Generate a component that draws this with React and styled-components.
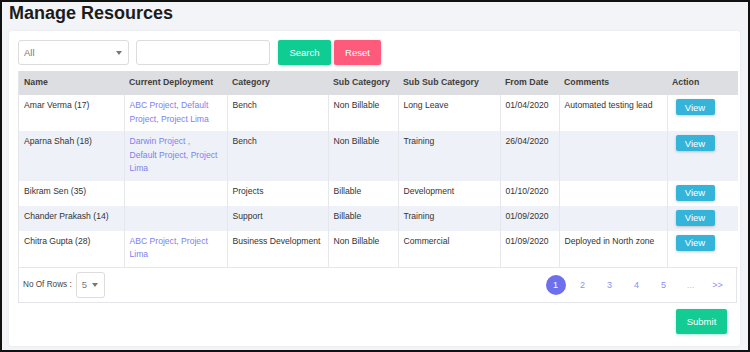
import styled, { createGlobalStyle } from "styled-components";

const GlobalStyle = createGlobalStyle`
  * { box-sizing: border-box; }
  body {
    margin: 0;
    font-family: "Liberation Sans", Arial, sans-serif;
  }
`;

const Page = styled.div`
  width: 750px;
  height: 352px;
  border: 2px solid #111;
  background: #f3f4f8;
  padding: 0 0 0 7px;
  overflow: hidden;
`;

const Title = styled.h1`
  margin: 0;
  font-size: 18px;
  line-height: 22px;
  font-weight: 700;
  color: #1c1c1c;
`;

const Card = styled.div`
  margin-top: 7px;
  width: 731px;
  height: 315px;
  background: #fff;
  border-radius: 3px;
  box-shadow: 0 0 3px rgba(0, 0, 0, 0.06);
  padding: 9px 3px 0 9px;
`;

const Toolbar = styled.div`
  display: flex;
  align-items: center;
  height: 25px;
`;

const SelectBox = styled.div`
  display: flex;
  align-items: center;
  justify-content: space-between;
  width: ${(p) => p.$w}px;
  height: ${(p) => p.$h}px;
  border: 1px solid #dcdcdc;
  border-radius: 3px;
  padding: 0 6px 0 5px;
  color: #7a7a7a;
  font-size: ${(p) => p.$fs}px;
  background: #fff;
`;

const Caret = styled.span`
  width: 0;
  height: 0;
  border-left: 3.5px solid transparent;
  border-right: 3.5px solid transparent;
  border-top: 4px solid #777;
`;

const TextInput = styled.div`
  width: 134px;
  height: 25px;
  margin-left: 7px;
  border: 1px solid #dcdcdc;
  border-radius: 3px;
`;

const Button = styled.button`
  border: none;
  border-radius: 2px;
  color: #fff;
  font-family: inherit;
  font-size: 9.5px;
  padding: 0;
  width: ${(p) => p.$w}px;
  height: ${(p) => p.$h}px;
  margin-left: ${(p) => p.$ml || 0}px;
  background: ${(p) => p.$bg};
  box-shadow: 0 1px 3px ${(p) => p.$shadow || "rgba(0,0,0,0.15)"};
`;

const TableWrap = styled.div`
  margin-top: 6px;
  width: 719px;
  border: 1px solid #e4e5e9;
  border-top: none;
`;

const Table = styled.table`
  width: 100%;
  border-collapse: collapse;
  table-layout: fixed;
  font-size: 8.6px;
  line-height: 13.5px;
  color: #333;
`;

const HeadCell = styled.th`
  background: #dddee2;
  height: 24px;
  padding: 0 2px 0 5px;
  text-align: left;
  font-weight: 700;
  font-size: 8.75px;
  color: #3e3e3e;
`;

const Row = styled.tr`
  background: ${(p) => (p.$striped ? "#eef1f8" : "#fff")};
`;

const Cell = styled.td`
  vertical-align: top;
  padding: 4px ${(p) => p.$pr}px 5px 5px;
  border-left: 1px solid #e6e7eb;
  color: ${(p) => (p.$link ? "#7d82ee" : "#333")};
  &:first-child { border-left: none; }
  tbody tr:last-child & { border-bottom: 1px solid #e6e7eb; }
`;

const ActionCell = styled(Cell)`
  padding: 4px 0 5px 8px;
`;

const ViewButton = styled(Button)`
  display: block;
  background: #35b4da;
`;

const Footer = styled.div`
  display: flex;
  align-items: center;
  justify-content: space-between;
  height: 34px;
  padding: 0 5px 0 4px;
`;

const RowsLabel = styled.div`
  display: flex;
  align-items: center;
  gap: 4px;
  font-size: 8.2px;
  color: #444;
`;

const Pager = styled.div`
  display: flex;
  align-items: center;
`;

const PageItem = styled.span`
  width: 27px;
  display: flex;
  justify-content: center;
  font-size: 9px;
  color: ${(p) => (p.$faint ? "#b9bbf4" : "#8d90ef")};
`;

const ActiveDot = styled.span`
  width: 20px;
  height: 20px;
  border-radius: 50%;
  background: #6c70ec;
  color: #fff;
  display: flex;
  align-items: center;
  justify-content: center;
`;

const FormActions = styled.div`
  display: flex;
  justify-content: flex-end;
  width: 719px;
  padding-right: 10px;
  margin-top: 6px;
`;

const cols = [
  { w: 105, pr: 4 },
  { w: 103, pr: 8 },
  { w: 101, pr: 2 },
  { w: 70, pr: 2 },
  { w: 102, pr: 4 },
  { w: 59, pr: 2 },
  { w: 108, pr: 2 },
  { w: 71, pr: 0 },
];
const heads = ["Name", "Current Deployment", "Category", "Sub Category", "Sub Sub Category", "From Date", "Comments", "Action"];

const rows = [
  ["Amar Verma (17)", "ABC Project, Default Project, Project Lima", "Bench", "Non Billable", "Long Leave", "01/04/2020", "Automated testing lead"],
  ["Aparna Shah (18)", "Darwin Project , Default Project, Project Lima", "Bench", "Non Billable", "Training", "26/04/2020", ""],
  ["Bikram Sen (35)", "", "Projects", "Billable", "Development", "01/10/2020", ""],
  ["Chander Prakash (14)", "", "Support", "Billable", "Training", "01/09/2020", ""],
  ["Chitra Gupta (28)", "ABC Project, Project Lima", "Business Development", "Non Billable", "Commercial", "01/09/2020", "Deployed in North zone"],
];

const App = () => {
  return (
    <Page>
      <GlobalStyle />
      <Title>Manage Resources</Title>
      <Card>
        <Toolbar>
          <SelectBox $w={111} $h={25} $fs={9.5}>
            All
            <Caret />
          </SelectBox>
          <TextInput />
          <Button $w={53} $h={25} $ml={8} $bg="#0fcc93">Search</Button>
          <Button $w={47} $h={25} $ml={3} $bg="#fe5a7c">Reset</Button>
        </Toolbar>
        <TableWrap>
          <Table>
            <colgroup>
              {cols.map((c, i) => (
                <col key={i} style={{ width: c.w }} />
              ))}
            </colgroup>
            <thead>
              <tr>
                {heads.map((h) => (
                  <HeadCell key={h}>{h}</HeadCell>
                ))}
              </tr>
            </thead>
            <tbody>
              {rows.map((r, i) => (
                <Row key={i} $striped={i % 2 === 1}>
                  {r.map((c, j) => (
                    <Cell key={j} $link={j === 1} $pr={cols[j].pr}>
                      {c}
                    </Cell>
                  ))}
                  <ActionCell>
                    <ViewButton $w={39} $h={16} $shadow="rgba(0,0,0,0.2)">View</ViewButton>
                  </ActionCell>
                </Row>
              ))}
            </tbody>
          </Table>
          <Footer>
            <RowsLabel>
              No Of Rows :
              <SelectBox $w={29} $h={26} $fs={9.5}>
                5
                <Caret />
              </SelectBox>
            </RowsLabel>
            <Pager>
              <PageItem>
                <ActiveDot>1</ActiveDot>
              </PageItem>
              <PageItem>2</PageItem>
              <PageItem>3</PageItem>
              <PageItem>4</PageItem>
              <PageItem>5</PageItem>
              <PageItem $faint>...</PageItem>
              <PageItem>&gt;&gt;</PageItem>
            </Pager>
          </Footer>
        </TableWrap>
        <FormActions>
          <Button $w={51} $h={25} $bg="#12cc94" $shadow="rgba(18,204,148,0.35)">Submit</Button>
        </FormActions>
      </Card>
    </Page>
  );
};

export default App;
